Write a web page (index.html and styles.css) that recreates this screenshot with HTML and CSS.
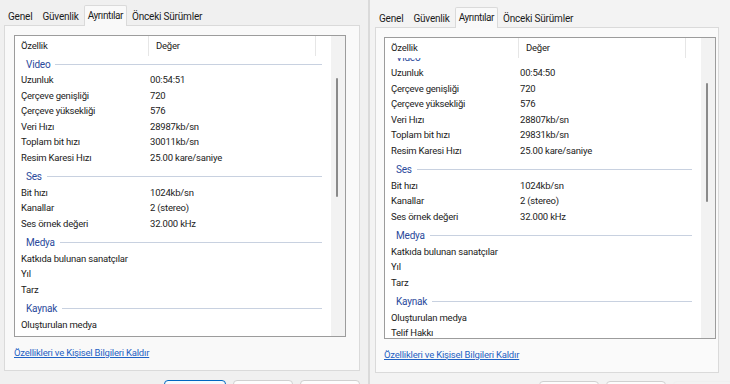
FILE: index.html
```html
<!DOCTYPE html>
<html lang="tr">

<head>
    <meta charset="UTF-8">
    <meta name="viewport" content="width=device-width, initial-scale=1.0">
    <link rel="stylesheet" href="styles.css">
    <title>Özellikler - Ayrıntılar</title>
</head>

<body>
    <!-- left dialog -->
    <div class="dialog dialog-a">
        <div class="tabs">
            <span class="tab">Genel</span>
            <span class="tab">Güvenlik</span>
            <span class="tab active">Ayrıntılar</span>
            <span class="tab">Önceki Sürümler</span>
        </div>
        <div class="panel">
            <div class="listview">
                <div class="lv-main">
                    <div class="lv-head">
                        <span class="col-name">Özellik</span>
                        <span class="col-value">Değer</span>
                    </div>
                    <div class="lv-body">
                        <div class="lv-rows">
                            <div class="group first"><span>Video</span></div>
                            <div class="row"><span class="name">Uzunluk</span><span class="value">00:54:51</span></div>
                            <div class="row"><span class="name">Çerçeve genişliği</span><span class="value">720</span></div>
                            <div class="row"><span class="name">Çerçeve yüksekliği</span><span class="value">576</span></div>
                            <div class="row"><span class="name">Veri Hızı</span><span class="value">28987kb/sn</span></div>
                            <div class="row"><span class="name">Toplam bit hızı</span><span class="value">30011kb/sn</span></div>
                            <div class="row"><span class="name">Resim Karesi Hızı</span><span class="value">25.00 kare/saniye</span></div>
                            <div class="group"><span>Ses</span></div>
                            <div class="row"><span class="name">Bit hızı</span><span class="value">1024kb/sn</span></div>
                            <div class="row"><span class="name">Kanallar</span><span class="value">2 (stereo)</span></div>
                            <div class="row"><span class="name">Ses örnek değeri</span><span class="value">32.000 kHz</span></div>
                            <div class="group"><span>Medya</span></div>
                            <div class="row"><span class="name">Katkıda bulunan sanatçılar</span><span class="value"></span></div>
                            <div class="row"><span class="name">Yıl</span><span class="value"></span></div>
                            <div class="row"><span class="name">Tarz</span><span class="value"></span></div>
                            <div class="group"><span>Kaynak</span></div>
                            <div class="row"><span class="name">Oluşturulan medya</span><span class="value"></span></div>
                            <div class="row"><span class="name">Telif Hakkı</span><span class="value"></span></div>
                        </div>
                    </div>
                </div>
                <div class="scrollbar"><div class="thumb"></div></div>
            </div>
            <a href="#" class="link">Özellikleri ve Kişisel Bilgileri Kaldır</a>
        </div>
        <div class="buttons">
            <button class="btn default">Tamam</button>
            <button class="btn">İptal</button>
            <button class="btn">Uygula</button>
        </div>
    </div>

    <div class="divider"></div>

    <!-- right dialog -->
    <div class="dialog dialog-b">
        <div class="tabs">
            <span class="tab">Genel</span>
            <span class="tab">Güvenlik</span>
            <span class="tab active">Ayrıntılar</span>
            <span class="tab">Önceki Sürümler</span>
        </div>
        <div class="panel">
            <div class="listview">
                <div class="lv-main">
                    <div class="lv-head">
                        <span class="col-name">Özellik</span>
                        <span class="col-value">Değer</span>
                    </div>
                    <div class="lv-body">
                        <div class="lv-rows">
                            <div class="group first"><span>Video</span></div>
                            <div class="row"><span class="name">Uzunluk</span><span class="value">00:54:50</span></div>
                            <div class="row"><span class="name">Çerçeve genişliği</span><span class="value">720</span></div>
                            <div class="row"><span class="name">Çerçeve yüksekliği</span><span class="value">576</span></div>
                            <div class="row"><span class="name">Veri Hızı</span><span class="value">28807kb/sn</span></div>
                            <div class="row"><span class="name">Toplam bit hızı</span><span class="value">29831kb/sn</span></div>
                            <div class="row"><span class="name">Resim Karesi Hızı</span><span class="value">25.00 kare/saniye</span></div>
                            <div class="group"><span>Ses</span></div>
                            <div class="row"><span class="name">Bit hızı</span><span class="value">1024kb/sn</span></div>
                            <div class="row"><span class="name">Kanallar</span><span class="value">2 (stereo)</span></div>
                            <div class="row"><span class="name">Ses örnek değeri</span><span class="value">32.000 kHz</span></div>
                            <div class="group"><span>Medya</span></div>
                            <div class="row"><span class="name">Katkıda bulunan sanatçılar</span><span class="value"></span></div>
                            <div class="row"><span class="name">Yıl</span><span class="value"></span></div>
                            <div class="row"><span class="name">Tarz</span><span class="value"></span></div>
                            <div class="group"><span>Kaynak</span></div>
                            <div class="row"><span class="name">Oluşturulan medya</span><span class="value"></span></div>
                            <div class="row"><span class="name">Telif Hakkı</span><span class="value"></span></div>
                        </div>
                    </div>
                </div>
                <div class="scrollbar"><div class="thumb"></div></div>
            </div>
            <a href="#" class="link">Özellikleri ve Kişisel Bilgileri Kaldır</a>
        </div>
        <div class="buttons">
            <button class="btn">Tamam</button>
            <button class="btn">İptal</button>
            <button class="btn disabled">Uygula</button>
        </div>
    </div>
</body>

</html>
```

FILE: styles.css
```css
* {
    margin: 0;
    padding: 0;
    box-sizing: border-box;
}

body {
    width: 730px;
    height: 384px;
    overflow: hidden;
    display: flex;
    background-color: #f0f0f0;
    font-family: 'Roboto', 'Liberation Sans', sans-serif;
    font-size: 9.5px;
    letter-spacing: -0.2px;
    color: #1b1b1b;
}

.dialog {
    display: flex;
    flex-direction: column;
    height: 384px;
    overflow: hidden;
}

.dialog > * {
    flex-shrink: 0;
}

.dialog-a {
    width: 368px;
    padding-top: 5px;
    background-color: #f0f0f0;
}

.dialog-b {
    width: 360px;
    padding-top: 7px;
    background-color: #f3f3f3;
}

.divider {
    width: 2px;
    height: 384px;
    background-color: #dadada;
}

/* tabs */
.tabs {
    display: flex;
    height: 21px;
    padding-left: 3px;
    position: relative;
    z-index: 1;
}

.dialog-b .tabs {
    padding-left: 4px;
}

.tab {
    padding: 2px 5px 0;
    line-height: 20px;
    font-size: 10px;
    color: #1b1b1b;
}

.tab.active {
    padding: 0 3px;
    line-height: 19px;
    height: 21px;
    letter-spacing: -0.4px;
    background-color: #f9f9f9;
    border: 1px solid #dadada;
    border-bottom: none;
    border-radius: 2px 2px 0 0;
}

/* tab page */
.panel {
    margin: -1px 8px 0 4px;
    height: 346px;
    background-color: #f9f9f9;
    border: 1px solid #dadada;
    padding: 9px 0 0 9px;
}

.dialog-b .panel {
    margin: -1px 11px 0 5px;
    padding-left: 8px;
    background-color: #fafafa;
}

.listview {
    width: 332px;
    height: 302px;
    display: flex;
    background-color: #fff;
    border: 1px solid #9c9c9c;
}

.lv-main {
    flex: 1;
    display: flex;
    flex-direction: column;
    min-width: 0;
}

.lv-head {
    display: flex;
    height: 20px;
    line-height: 19px;
    background-color: #fff;
    position: relative;
    z-index: 1;
}

.col-name {
    width: 134px;
    padding-left: 6px;
    border-right: 1px solid #e6e6e6;
}

.col-value {
    width: 167px;
    padding-left: 7px;
    border-right: 1px solid #e6e6e6;
}

.lv-body {
    flex: 1;
    overflow: hidden;
}

.lv-rows {
    padding-right: 9px;
}

.dialog-b .lv-rows {
    margin-top: -9px;
}

.row {
    display: flex;
    height: 15.5px;
    line-height: 15.5px;
}

.row .name {
    width: 135px;
    padding-left: 6px;
}

.group {
    display: flex;
    align-items: center;
    gap: 5px;
    height: 19.5px;
    padding-top: 3.5px;
    padding-left: 11px;
    color: #2a4a9c;
    font-size: 10px;
}

.group.first {
    height: 16px;
    padding-top: 0;
}

.group::after {
    content: '';
    flex: 1;
    height: 1px;
    background-color: #c8d1e0;
}

/* scrollbar */
.scrollbar {
    width: 14px;
    background-color: #f2f2f2;
    padding: 42px 0 0 5px;
}

.dialog-b .scrollbar {
    padding-top: 45px;
}

.thumb {
    width: 2px;
    height: 119px;
    border-radius: 1px;
    background-color: #8a8a8a;
}

.link {
    display: inline-block;
    margin-top: 10px;
    color: #1f62c4;
    text-decoration: underline;
    line-height: 12px;
}

/* bottom buttons */
.buttons {
    display: flex;
    justify-content: flex-end;
    gap: 7px;
    padding: 9px 8px 0 0;
}

.dialog-b .buttons {
    padding: 8px 0 0 0;
    margin-right: -3px;
}

.btn {
    width: 60px;
    height: 22px;
    font-family: inherit;
    font-size: 9.5px;
    color: #1b1b1b;
    background-color: #fdfdfd;
    border: 1px solid #d0d0d0;
    border-radius: 4px;
}

.btn.default {
    width: 62px;
    border-color: #0067c0;
    background-color: #f5f9fd;
}

.btn.disabled {
    border-color: #f0f0f0;
    background-color: #f3f3f3;
    color: #a0a0a0;
}
```
